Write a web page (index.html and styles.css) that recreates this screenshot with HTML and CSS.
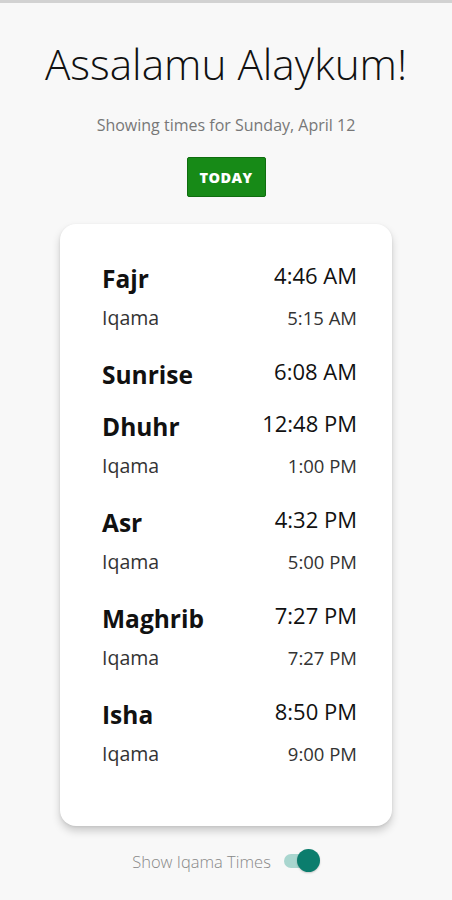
FILE: index.html
```html
<!DOCTYPE html>
<html>
<head>
<meta charset="utf-8">
<link rel="stylesheet" href="styles.css">
</head>
<body>
<div class="page">
  <h1 class="greeting">Assalamu Alaykum!</h1>
  <p class="subtitle">Showing times for Sunday, April 12</p>
  <button class="today">TODAY</button>
  <div class="card">
    <div class="prayer">
      <div class="row main"><span class="name">Fajr</span><span class="time">4:46 AM</span></div>
      <div class="row iqama"><span class="label">Iqama</span><span class="itime">5:15 AM</span></div>
    </div>
    <div class="prayer solo">
      <div class="row main"><span class="name">Sunrise</span><span class="time">6:08 AM</span></div>
    </div>
    <div class="prayer">
      <div class="row main"><span class="name">Dhuhr</span><span class="time">12:48 PM</span></div>
      <div class="row iqama"><span class="label">Iqama</span><span class="itime">1:00 PM</span></div>
    </div>
    <div class="prayer">
      <div class="row main"><span class="name">Asr</span><span class="time">4:32 PM</span></div>
      <div class="row iqama"><span class="label">Iqama</span><span class="itime">5:00 PM</span></div>
    </div>
    <div class="prayer">
      <div class="row main"><span class="name">Maghrib</span><span class="time">7:27 PM</span></div>
      <div class="row iqama"><span class="label">Iqama</span><span class="itime">7:27 PM</span></div>
    </div>
    <div class="prayer">
      <div class="row main"><span class="name">Isha</span><span class="time">8:50 PM</span></div>
      <div class="row iqama"><span class="label">Iqama</span><span class="itime">9:00 PM</span></div>
    </div>
  </div>
  <div class="toggle-row">
    <span class="toggle-label">Show Iqama Times</span>
    <span class="switch"><span class="track"></span><span class="thumb"></span></span>
  </div>
</div>
</body>
</html>
```
FILE: styles.css
```css
html, body {
  margin: 0;
  padding: 0;
}
body {
  background: #f8f8f8;
  font-family: "Open Sans", "Liberation Sans", sans-serif;
  width: 452px;
  height: 900px;
  overflow: hidden;
}
.page {
  border-top: 3px solid #d2d2d2;
  display: flex;
  flex-direction: column;
  align-items: center;
}
.greeting {
  margin: 36px 0 0;
  font-weight: 300;
  font-size: 42.3px;
  line-height: 50px;
  color: #111;
}
.subtitle {
  margin: 26px 0 0;
  font-size: 16px;
  line-height: 20px;
  color: #777;
}
.today {
  margin-top: 22px;
  width: 79px;
  height: 40px;
  background: #178a17;
  border: 1px solid #0f6d0f;
  border-radius: 2px;
  color: #fff;
  font-family: "Open Sans", sans-serif;
  font-weight: 800;
  font-size: 14.5px;
  letter-spacing: 0.4px;
  padding: 0;
}
.card {
  margin-top: 27px;
  width: 332px;
  box-sizing: border-box;
  background: #fff;
  border-radius: 16px;
  box-shadow: 0 5px 9px rgba(0,0,0,0.18), 0 1px 3px rgba(0,0,0,0.08);
  padding: 26px 35px 44px 42px;
}
.prayer {
  margin-bottom: 14px;
}
.prayer.solo {
  margin-bottom: 0;
}
.row {
  display: flex;
  justify-content: space-between;
  align-items: center;
}
.row.main {
  height: 52px;
}
.name {
  font-weight: 700;
  font-size: 24.5px;
  color: #111;
  margin-top: 4px;
}
.time {
  font-size: 22px;
  color: #111;
  margin-bottom: 2px;
}
.row.iqama {
  height: 30px;
  color: #333;
}
.label {
  font-size: 19.5px;
}
.itime {
  font-size: 18.5px;
}
.toggle-row {
  margin-top: 23px;
  display: flex;
  align-items: center;
  gap: 13px;
}
.toggle-label {
  font-size: 16.5px;
  font-weight: 300;
  color: #888;
}
.switch {
  position: relative;
  width: 36px;
  height: 24px;
  display: inline-block;
}
.track {
  position: absolute;
  left: 0;
  top: 5px;
  width: 34px;
  height: 14px;
  border-radius: 7px;
  background: #a9d6cf;
}
.thumb {
  position: absolute;
  left: 13px;
  top: 0;
  width: 23px;
  height: 23px;
  border-radius: 50%;
  background: #0b7d6d;
  box-shadow: 0 1px 2px rgba(0,0,0,0.2);
}
```
